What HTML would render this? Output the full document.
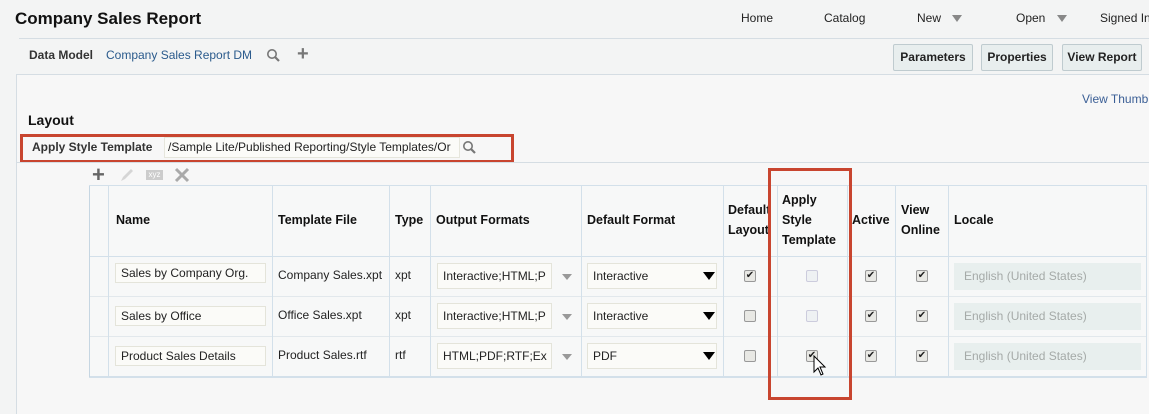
<!DOCTYPE html>
<html><head><meta charset="utf-8"><style>
*{margin:0;padding:0;box-sizing:border-box}
body{width:1149px;height:403px;overflow:hidden;background:#f3f4f4;font-family:"Liberation Sans",Arial,sans-serif;font-size:12px;color:#222;position:relative}
.a{position:absolute;white-space:nowrap}
.btn{position:absolute;top:44px;height:27px;border:1px solid #bfcbcf;background:#e8eeee;font-weight:bold;font-size:12px;line-height:25px;text-align:center;border-radius:2px;color:#222}
.panel{position:absolute;left:16px;top:74px;width:1140px;height:340px;background:#f7f7f7;border-top:1px solid #d5dde3;border-left:1px solid #d5dde3}
.vl{position:absolute;top:186px;height:191px;width:1px;background:#d3e0ea}
.hl{position:absolute;left:89px;width:1058px;height:1px;background:#e2e8ec}
.th{position:absolute;font-weight:bold;font-size:12.5px;color:#111;line-height:20px}
.inp{position:absolute;height:26px;border:1px solid #e4e4da;background:#fbfbf8;font-size:12px;line-height:24px;padding-left:5px;color:#222;overflow:hidden;white-space:nowrap}
.cb{position:absolute;width:12px;height:12px;border:1px solid #999;border-radius:2px;background:#e8e8e4;font-size:10px;line-height:10px;text-align:center;color:#222}
.cb.d{border-color:#ccd;background:#eef1f3}
.loc{position:absolute;left:954px;width:187px;height:27px;background:#e8efee;color:#a5aaa8;font-size:12px;line-height:27px;padding-left:10px}
.tri{position:absolute;width:0;height:0;border-left:5px solid transparent;border-right:5px solid transparent}
</style></head><body>
<div class="a" style="left:15px;top:9px;font-size:17px;font-weight:bold;color:#111">Company Sales Report</div>
<div class="a" style="left:741px;top:11px;font-size:12px">Home</div>
<div class="a" style="left:824px;top:11px">Catalog</div>
<div class="a" style="left:917px;top:11px">New</div>
<div class="tri" style="left:952px;top:15px;border-top:7px solid #888"></div>
<div class="a" style="left:1016px;top:11px">Open</div>
<div class="tri" style="left:1057px;top:15px;border-top:7px solid #888"></div>
<div class="a" style="left:1100px;top:11px">Signed In</div>
<div class="a" style="left:19px;top:38px;width:1130px;height:1px;background:#d5dde3"></div>
<div class="a" style="left:29px;top:48px;font-weight:bold;color:#333">Data Model</div>
<div class="a" style="left:106px;top:48px;color:#2a5a8c">Company Sales Report DM</div>
<svg class="a" style="left:266px;top:48px" width="16" height="16"><circle cx="6" cy="6" r="4.2" fill="none" stroke="#777" stroke-width="1.6"/><path d="M9 9l4 4" stroke="#777" stroke-width="2.2"/></svg>
<div class="a" style="left:297px;top:43px;font-size:20px;font-weight:bold;color:#777">+</div>
<div class="btn" style="left:893px;width:80px">Parameters</div>
<div class="btn" style="left:981px;width:72px">Properties</div>
<div class="btn" style="left:1062px;width:80px">View Report</div>
<div class="panel"></div>
<div class="a" style="left:1082px;top:92px;color:#3a5e95">View Thumbnails</div>
<div class="a" style="left:28px;top:112px;font-size:14px;font-weight:bold;color:#111">Layout</div>
<div class="a" style="left:20px;top:134px;width:494px;height:29px;border:3px solid #c8452f"></div>
<div class="a" style="left:32px;top:140px;font-weight:bold;color:#333">Apply Style Template</div>
<div class="a" style="left:164px;top:137px;width:296px;height:21px;background:#fbfbf8;border:1px solid #e6e6dc;font-size:12px;line-height:19px;padding-left:3px;overflow:hidden">/Sample Lite/Published Reporting/Style Templates/Or</div>
<svg class="a" style="left:462px;top:140px" width="16" height="16"><circle cx="6" cy="6" r="4.2" fill="none" stroke="#777" stroke-width="1.6"/><path d="M9 9l4 4" stroke="#777" stroke-width="2.2"/></svg>
<div class="a" style="left:16px;top:162px;width:1133px;height:1px;background:#d5dde3"></div>
<div class="a" style="left:92px;top:162px;font-size:22px;font-weight:bold;color:#666">+</div>
<svg class="a" style="left:119px;top:167px" width="16" height="16"><path d="M2 14l2-4 8-8 2 2-8 8z" fill="#d5d5d5"/></svg>
<div class="a" style="left:146px;top:170px;width:17px;height:10px;background:#ccc;color:#fff;font-size:8px;line-height:10px;text-align:center">xyz</div>
<svg class="a" style="left:174px;top:167px" width="16" height="16"><path d="M2 2l12 12M14 2L2 14" stroke="#aaa" stroke-width="3"/></svg>
<div class="a" style="left:89px;top:185px;width:1058px;height:193px;background:#f7f8f8;border-top:1px solid #d3e0ea;border-bottom:2px solid #d3e0ea"></div>
<div class="hl" style="top:256px;background:#d3e0ea"></div>
<div class="hl" style="top:296px"></div>
<div class="hl" style="top:336px"></div>
<div class="vl" style="left:89px;background:#c6d6e2"></div>
<div class="vl" style="left:108px"></div>
<div class="vl" style="left:272px"></div>
<div class="vl" style="left:389px"></div>
<div class="vl" style="left:430px"></div>
<div class="vl" style="left:581px"></div>
<div class="vl" style="left:723px"></div>
<div class="vl" style="left:777px"></div>
<div class="vl" style="left:847px"></div>
<div class="vl" style="left:895px"></div>
<div class="vl" style="left:948px"></div>
<div class="vl" style="left:1146px"></div>
<div class="th" style="left:116px;top:210px">Name</div>
<div class="th" style="left:278px;top:210px">Template File</div>
<div class="th" style="left:395px;top:210px">Type</div>
<div class="th" style="left:436px;top:210px">Output Formats</div>
<div class="th" style="left:587px;top:210px">Default Format</div>
<div class="th" style="left:728px;top:200px;width:48px;overflow:hidden">Default<br>Layout</div>
<div class="th" style="left:782px;top:190px">Apply<br>Style<br>Template</div>
<div class="th" style="left:852px;top:210px">Active</div>
<div class="th" style="left:901px;top:200px">View<br>Online</div>
<div class="th" style="left:954px;top:210px">Locale</div>

<div class="inp" style="left:115px;top:263px;width:151px;height:20px;line-height:18px">Sales by Company Org.</div>
<div class="a" style="left:278px;top:268px">Company Sales.xpt</div>
<div class="a" style="left:395px;top:268px">xpt</div>
<div class="inp" style="left:437px;top:263px;width:115px">Interactive;HTML;P</div>
<div class="tri" style="left:562px;top:274px;border-top:6px solid #999"></div>
<div class="inp" style="left:587px;top:263px;width:130px">Interactive</div>
<div class="tri" style="left:703px;top:272px;border-top:8px solid #000;border-left-width:6px;border-right-width:6px"></div>
<div class="cb" style="left:744px;top:270px">✔</div>
<div class="cb d" style="left:806px;top:270px"></div>
<div class="cb" style="left:865px;top:270px">✔</div>
<div class="cb" style="left:916px;top:270px">✔</div>
<div class="loc" style="top:263px">English (United States)</div>

<div class="inp" style="left:115px;top:306px;width:151px;height:20px;line-height:18px">Sales by Office</div>
<div class="a" style="left:278px;top:308px">Office Sales.xpt</div>
<div class="a" style="left:395px;top:308px">xpt</div>
<div class="inp" style="left:437px;top:303px;width:115px">Interactive;HTML;P</div>
<div class="tri" style="left:562px;top:314px;border-top:6px solid #999"></div>
<div class="inp" style="left:587px;top:303px;width:130px">Interactive</div>
<div class="tri" style="left:703px;top:312px;border-top:8px solid #000;border-left-width:6px;border-right-width:6px"></div>
<div class="cb" style="left:744px;top:310px"></div>
<div class="cb d" style="left:806px;top:310px"></div>
<div class="cb" style="left:865px;top:310px">✔</div>
<div class="cb" style="left:916px;top:310px">✔</div>
<div class="loc" style="top:303px">English (United States)</div>

<div class="inp" style="left:115px;top:346px;width:151px;height:20px;line-height:18px">Product Sales Details</div>
<div class="a" style="left:278px;top:348px">Product Sales.rtf</div>
<div class="a" style="left:395px;top:348px">rtf</div>
<div class="inp" style="left:437px;top:343px;width:115px">HTML;PDF;RTF;Ex</div>
<div class="tri" style="left:562px;top:354px;border-top:6px solid #999"></div>
<div class="inp" style="left:587px;top:343px;width:130px">PDF</div>
<div class="tri" style="left:703px;top:352px;border-top:8px solid #000;border-left-width:6px;border-right-width:6px"></div>
<div class="cb" style="left:744px;top:350px"></div>
<div class="cb" style="left:806px;top:350px">✔</div>
<div class="cb" style="left:865px;top:350px">✔</div>
<div class="cb" style="left:916px;top:350px">✔</div>
<div class="loc" style="top:343px">English (United States)</div>
<svg class="a" style="left:813px;top:355px" width="14" height="22"><path d="M1 1v16l4-4 3 7 2-1-3-7h5z" fill="#fff" stroke="#000" stroke-width="1"/></svg>
<div class="a" style="left:768px;top:168px;width:84px;height:232px;border:3px solid #c8452f"></div>
</body></html>
